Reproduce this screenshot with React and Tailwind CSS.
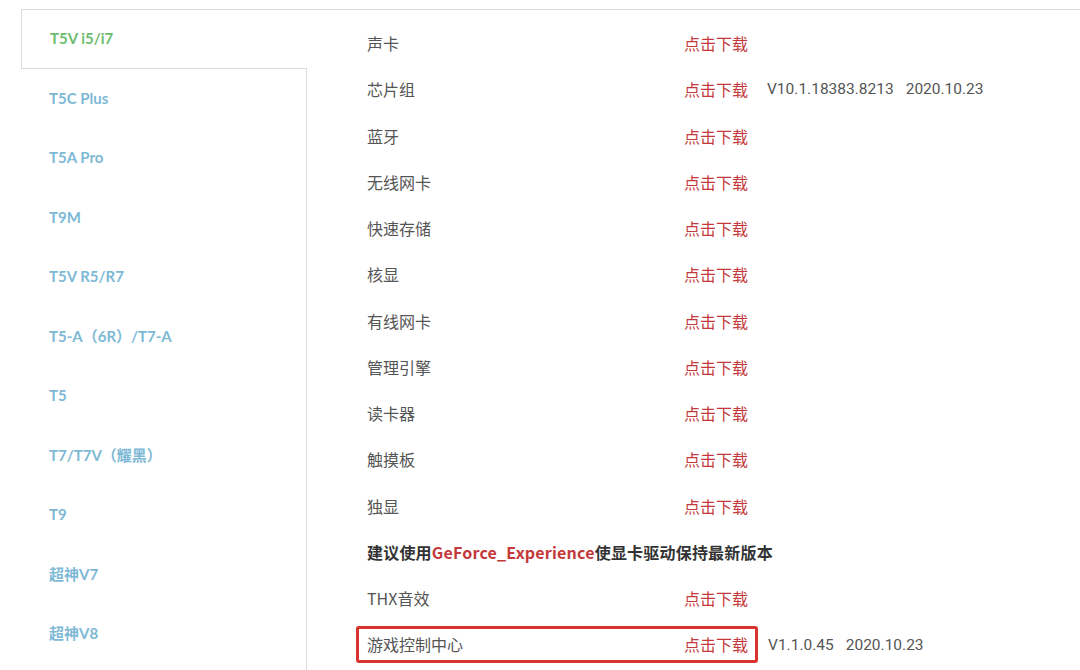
import React from 'react';

const models = [
  'T5C Plus',
  'T5A Pro',
  'T9M',
  'T5V R5/R7',
  'T5-A（6R）/T7-A',
  'T5',
  'T7/T7V（耀黑）',
  'T9',
  '超神V7',
  '超神V8',
];

const drivers = [
  { name: '声卡' },
  { name: '芯片组', version: 'V10.1.18383.8213', date: '2020.10.23' },
  { name: '蓝牙' },
  { name: '无线网卡' },
  { name: '快速存储' },
  { name: '核显' },
  { name: '有线网卡' },
  { name: '管理引擎' },
  { name: '读卡器' },
  { name: '触摸板' },
  { name: '独显' },
  { note: true },
  { name: 'THX音效' },
  { name: '游戏控制中心', version: 'V1.1.0.45', date: '2020.10.23', highlight: true },
];

const cjk = '"Noto Sans CJK SC", sans-serif';

function Version({ version, date }) {
  if (!version) return null;
  return (
    <span className="text-[15.5px] text-[#555]" style={{ fontFamily: 'Roboto, "Noto Sans CJK SC", sans-serif' }}>
      {version}<span className="ml-[12px]">{date}</span>
    </span>
  );
}

function DriverRow({ d }) {
  if (d.note) {
    return (
      <div className="h-[46.25px] flex items-center font-bold text-[16px] tracking-[0.2px] text-[#333]">
        建议使用<span className="text-[#c4393b]">GeForce_Experience</span>使显卡驱动保持最新版本
      </div>
    );
  }
  if (d.highlight) {
    return (
      <div className="h-[46.25px] flex items-center">
        <div className="-ml-[11px] pl-[8px] pr-[7px] h-[37px] flex items-center border-[3px] border-[#d8332e] rounded-[3px]">
          <span className="w-[317px] text-[16px] text-[#555]">{d.name}</span>
          <span className="text-[16px] text-[#c4393b]">点击下载</span>
        </div>
        <span className="ml-[10px]"><Version version={d.version} date={d.date} /></span>
      </div>
    );
  }
  return (
    <div className="h-[46.25px] flex items-center">
      <span className="w-[317px] text-[16px] text-[#555]">{d.name}</span>
      <span className="w-[83px] text-[16px] text-[#c4393b]">点击下载</span>
      <Version version={d.version} date={d.date} />
    </div>
  );
}

export default function App() {
  return (
    <div className="h-[670px] w-[1080px] overflow-hidden bg-white pt-[9px] pl-[21px]" style={{ fontFamily: cjk }}>
      <div className="flex h-full border-t border-[#dcdcdc]">
        <div className="w-[286px] flex flex-col shrink-0" style={{ fontFamily: 'Lato, "Noto Sans CJK SC", sans-serif' }}>
          <div className="h-[59px] flex items-center pl-[28px] pb-[2px] border-l border-b border-[#dcdcdc] bg-white font-bold text-[15px] text-[#6cbc6e]">
            T5V i5/i7
          </div>
          <div className="flex-1 border-r border-[#dcdcdc]">
            {models.map(m => (
              <div key={m} className="h-[59.5px] flex items-center pl-[28px] pb-[2px] font-bold text-[15px] text-[#7db9d5]">
                {m}
              </div>
            ))}
          </div>
        </div>
        <div className="flex-1 pl-[60px] pt-[10px]">
          {drivers.map((d, i) => (
            <DriverRow key={i} d={d} />
          ))}
        </div>
      </div>
    </div>
  );
}
